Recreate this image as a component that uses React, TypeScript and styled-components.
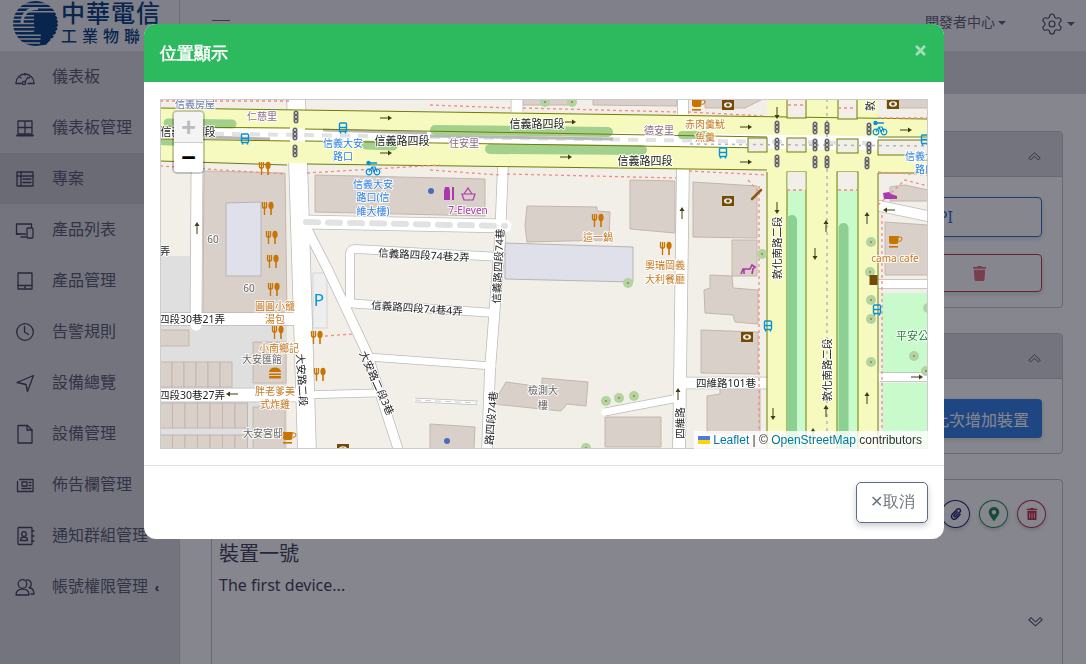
import React from "react";
import styled, { createGlobalStyle } from "styled-components";
import { FaPaperclip, FaMapMarkerAlt, FaTrash, FaTrashAlt, FaTimes } from "react-icons/fa";
import { Settings } from "lucide-react";

const FONT = `"Noto Sans", "Noto Sans CJK TC", sans-serif`;
const Global = createGlobalStyle`
  html, body { margin: 0; padding: 0; width: 100%; height: 100%; overflow: hidden; }
  #root { height: 100%; }
  * { box-sizing: border-box; }
`;

const Page = styled.div`
  display: flex; height: 664px; width: 1086px; overflow: hidden;
  font-family: ${FONT}; background: #fff; color: #3b3d55;
`;
const Sidebar = styled.aside`
  width: 180px; flex: none; background: #dbdbde; border-right: 1px solid #cfcfd3;
  display: flex; flex-direction: column;
`;
const LogoBox = styled.div`
  height: 51px; flex: none; background: #f3f3f6; padding: 0 0 0 12px;
  display: flex; align-items: flex-start; gap: 2px; overflow: hidden;
`;
const LogoText = styled.div`display: flex; flex-direction: column; color: #003c7c; white-space: nowrap;`;
const LogoMain = styled.div`font-size: 24px; line-height: 28px; letter-spacing: 1px; font-weight: 500; margin-top: -1px;`;
const LogoSub = styled.div`font-size: 16px; line-height: 18px; letter-spacing: 5px; font-weight: 500;`;
const NavItem = styled.div<{ $active?: boolean }>`
  height: 51px; flex: none; display: flex; align-items: center; padding-left: 13px; gap: 15px;
  font-size: 16px; color: #55586e; white-space: nowrap;
  background: ${(p) => (p.$active ? "#c9c9ce" : "transparent")};
`;
const NavText = styled.span`padding-bottom: 3px;`;
const NavCaret = styled.span`font-size: 13px; font-weight: 700; margin-left: 3px; color: #3f4058;`;
const Main = styled.main`flex: 1; display: flex; flex-direction: column; min-width: 0;`;
const Header = styled.header`
  height: 51px; flex: none; background: #f3f3f6; display: flex; align-items: center;
  padding: 0 11px 4px 32px; font-size: 14px; color: #5a5d72;
`;
const Burger = styled.div`
  position: relative; width: 18px; height: 14px; margin-top: 6px;
  border-top: 1.5px solid #666; border-bottom: 1.5px solid #666;
  &::after { content: ""; position: absolute; left: 0; right: 0; top: 4px; height: 1.5px; background: #666; }
`;
const HeaderRight = styled.div`margin-left: auto; display: flex; align-items: center; gap: 34px;`;
const DevCenter = styled.span`padding-bottom: 5px;`;
const Caret = styled.span`
  display: inline-block; margin-left: 3px; width: 0; height: 0; vertical-align: middle;
  border-left: 4px solid transparent; border-right: 4px solid transparent; border-top: 4px solid currentColor;
`;
const SubBar = styled.div`height: 43px; flex: none; background: #dbdbde;`;
const Content = styled.div`flex: 1; padding: 37px 23px 0 31px; display: flex; flex-direction: column; gap: 25px; min-height: 0;`;
const Card = styled.section<{ $tall?: boolean }>`
  border: 1px solid #c4c4ca; border-radius: 4px; flex: none;
  ${(p) => (p.$tall ? "height: 190px;" : "")}
`;
const CardHead = styled.div`
  height: 45px; background: #dbdbde; border-bottom: 1px solid #c4c4ca; display: flex;
  align-items: center; justify-content: flex-end; padding: 5px 21px 0 0; border-radius: 3px 3px 0 0;
`;
const CardBody = styled.div`padding: 20px 20px 15px; display: flex; flex-direction: column; gap: 17px;`;
const OutlineBlue = styled.div`
  height: 40px; border: 1px solid #2a6fd0; border-radius: 4px; color: #2a6fd0; display: flex; align-items: center;
  justify-content: flex-end; padding-right: 88px; box-shadow: 0 2px 5px rgba(0,0,0,.15); font-size: 16px;
`;
const OutlineRed = styled.div`
  height: 38px; border: 1px solid #c93545; border-radius: 4px; color: #e0707b; display: flex; align-items: center;
  justify-content: flex-end; padding-right: 54px; box-shadow: 0 2px 5px rgba(0,0,0,.15); font-size: 15px;
`;
const SolidBlue = styled.div`
  height: 39px; align-self: flex-end; background: #2f7fe6; border-radius: 4px; color: #fff; font-size: 16px;
  display: flex; align-items: center; padding: 0 13px; box-shadow: 0 2px 5px rgba(0,0,0,.15); white-space: nowrap;
`;
const DeviceBody = styled.div`padding: 20px 16px 0 7px; display: flex; flex-direction: column;`;
const RoundRow = styled.div`display: flex; justify-content: flex-end; gap: 9px; height: 28px;`;
const RoundBtn = styled.div<{ $c: string }>`
  width: 29px; height: 28px; border-radius: 50%; border: 1px solid ${(p) => p.$c}; color: ${(p) => p.$c};
  display: flex; align-items: center; justify-content: center; font-size: 12px; box-shadow: 0 2px 4px rgba(0,0,0,.18);
`;
const DevTitle = styled.div`font-size: 20px; line-height: 28px; margin-top: 12px; color: #3f4058;`;
const DevText = styled.div`font-size: 16px; line-height: 24px; margin-top: 5px; color: #3f4058;`;
const DevFoot = styled.div`display: flex; justify-content: flex-end; padding: 19px 3px 0 0;`;

const Backdrop = styled.div`position: fixed; inset: 0; background: rgba(13, 13, 30, .5);`;
const Modal = styled.div`
  position: fixed; left: 144px; top: 24px; width: 800px; height: 515px; background: #fff;
  border-radius: 12px; overflow: hidden; display: flex; flex-direction: column;
`;
const ModalHead = styled.div`
  height: 58px; flex: none; background: #2dba5e; color: #fff; display: flex; align-items: center;
  justify-content: space-between; padding: 0 16px 0 16px; font-size: 17px; font-weight: 700;
`;
const CloseX = styled.span`display: flex; opacity: .55; margin-top: -6px;`;
const ModalBody = styled.div`padding: 17px 16px 16px; border-bottom: 1px solid #dee2e6; flex: none;`;
const MapBox = styled.div`position: relative; width: 768px; height: 350px; overflow: hidden; background: #f2efe9; outline: 1px solid #ccc; outline-offset: -1px;`;
const MapSvg = styled.svg`display: block; width: 768px; height: 350px;`;
const ZoomBar = styled.div`
  position: absolute; left: 12px; top: 11px; width: 33px; border: 2px solid rgba(0,0,0,.2); border-radius: 5px;
  background-clip: padding-box; overflow: hidden;
`;
const ZoomBtn = styled.div<{ $off?: boolean }>`
  height: 30px; width: 100%; display: flex; align-items: center; justify-content: center;
  background: ${(p) => (p.$off ? "#f4f4f4" : "#fff")}; color: ${(p) => (p.$off ? "#bbb" : "#000")};
  font: 700 25px "Liberation Sans", sans-serif;
  & + & { border-top: 1px solid #ccc; }
`;
const Attribution = styled.div`
  position: absolute; right: 0; bottom: 0; height: 18px; padding: 0 6px 0 4px; background: rgba(255,255,255,.8);
  font: 12px/18px "Liberation Sans", sans-serif; color: #333; display: flex; align-items: center; gap: 3px; white-space: pre;
`;
const AttrLink = styled.span`color: #0078a8;`;
const ModalFoot = styled.div`flex: 1; display: flex; justify-content: flex-end; align-items: flex-start; padding: 16px;`;
const CancelBtn = styled.div`
  width: 72px; height: 41px; border: 1px solid #5c6b88; border-radius: 5px; color: #6c757d; font-size: 16px;
  display: flex; align-items: center; justify-content: center; box-shadow: 0 3px 6px rgba(0,0,0,.2);
`;

const Lbl = styled.text<{ $k: string; $fs?: number }>`
  font-family: "Noto Sans", "Noto Sans CJK TC", sans-serif;
  font-size: ${(p) => p.$fs ?? 10}px;
  text-anchor: middle; dominant-baseline: central;
  paint-order: stroke; stroke: rgba(255,255,255,.85); stroke-width: 2px;
  fill: ${(p) => ({ road: "#222", poi: "#c47a22", gray: "#666", hamlet: "#8a6b8f", blue: "#2d82e8", brand: "#ac39ac", green: "#258a38", corp: "#6677aa" } as Record<string, string>)[p.$k]};
`;

const Ic = ({ children, s = 24 }: { children: React.ReactNode; s?: number }) => (
  <svg width={s} height={s} viewBox="0 0 24 24" fill="none" stroke="#3f4058" strokeWidth={1.3} strokeLinecap="round" strokeLinejoin="round" style={{ flex: "none" }}>{children}</svg>
);

const nav: [string, React.ReactNode, boolean?][] = [
  ["儀表板", <><path d="M3 18a9 9 0 1 1 18 0" /><path d="M3 18.5h6M15 18.5h6" /><circle cx="11" cy="18" r="1.6" /><path d="M12 17l3-5M7 12l1 1M12 8.500v1.500M17 12l-1 1" /></>],
  ["儀表板管理", <><path d="M5 5h14v13H5zM12 5v13M5 11.500h14" /><path d="M4 19.500h16" strokeWidth={2} /></>],
  ["專案", <><rect x="4" y="5" width="16" height="14" /><path d="M4 9h16M8 5v14M10 12h8M10 15.500h8" /></>, true],
  ["產品列表", <><path d="M6 16H3.500V6h15v3" /><path d="M3.500 16h9M8 19h5" /><rect x="14" y="10" width="6" height="10" rx="1" /></>],
  ["產品管理", <><rect x="5" y="4" width="14" height="16" /><path d="M5 16.500h14" /><circle cx="12" cy="18.200" r=".4" /></>],
  ["告警規則", <><circle cx="12" cy="12" r="8.300" /><path d="M11.500 6.500V12l4 2.500" /></>],
  ["設備總覽", <path d="M20.500 4.500L4 11.500l9 2 1.500 7z" />],
  ["設備管理", <><path d="M5 3.500h9.500L19 8v13H5z" /><path d="M14 3.500V8h5" /></>],
  ["佈告欄管理", <><path d="M6.500 6.500H20v12H4.500V8.500" /><rect x="9" y="9" width="5" height="4" /><path d="M16 9.500h2M16 12.500h2M9 15.500h9" /></>],
  ["通知群組管理", <><rect x="5" y="3.500" width="14" height="17" rx=".8" /><circle cx="11" cy="10" r="2.300" /><path d="M7.500 16.500c0-2.500 1.500-3.500 3.500-3.500s3.500 1 3.500 3.500zM19 7h2M19 12h2M19 17h2" /></>],
  ["帳號權限管理", <><circle cx="9.500" cy="9" r="4.300" /><path d="M3 20c0-4 2.300-5.800 6.500-5.800s6.500 1.800 6.500 5.800zM13.500 5a4 4 0 0 1 2.500 7.500c3 .5 5 2.300 5 6.500h-3" /></>],
];

const Chev = ({ up, w = 13 }: { up?: boolean; w?: number }) => (
  <svg width={w} height={w * 0.72} viewBox="0 0 18 13" fill="none" stroke="#55576c" strokeWidth="1.300" strokeLinejoin="round" style={{ transform: up ? "none" : "rotate(180deg)" }}>
    <path d="M9 1L17 8.500 14.500 11 9 6 3.500 11 1 8.500Z" />
  </svg>
);

const Logo = () => (
  <svg width="47" height="48" viewBox="0 0 47 48" style={{ flex: "none" }}>
    <defs><clipPath id="lc"><circle cx="23.500" cy="23.500" r="22.500" /></clipPath></defs>
    <g clipPath="url(#lc)" stroke="#003c7c" strokeWidth="2.400">
      {Array.from({ length: 12 }, (_, i) => <line key={i} x1="0" x2="47" y1={2 + i * 3.9} y2={2 + i * 3.9} />)}
    </g>
    <path d="M22 13.500H42c3.500 4 4 12 1.500 18l-9 13c-3 .8-4 .8-6.500.6L29 34.500l-9-1.500 4-3.500-2-3 .1-7.500z" fill="#003c7c" />
    <path d="M10 23.500C10 14 16 8 26 8.500" fill="none" stroke="#f3f3f6" strokeWidth="3" />
  </svg>
);

// ---------- map drawing ----------
const ROADS: [string, number][] = [
  ["M296 95L307 452", 18], ["M197 165L196 325", 11], ["M155 319L298 319", 12], ["M155 395L300 395", 13], ["M300 395L375 393", 7],
  ["M305 225L328 270L367 353L399 452", 9], ["M503 165L500 240L490 370L487 452", 10],
  ["M350 302L350 254Q350 249 356 249L500 257", 8], ["M345 303L495 313", 8], ["M368 357L492 366", 7],
  ["M683 165L679 452", 12], ["M605 412L673 399", 7], ["M680 383L770 383", 11], ["M875 205L932 217", 10], ["M875 284L932 284", 8], ["M880 377L932 377", 8],
  ["M517 95L517 112", 11], ["M683 95L683 114", 10], ["M305 222L505 226", 13], ["M415 400L478 403", 3],
];
const BUILDINGS = [
  "315,175 485,179 485,216 315,212", "204,171 285,173 287,313 203,313", "527,206 597,207 597,211 610,212 609,240 527,242 525,226",
  "630,180 675,181 675,233 630,229", "506,382 542,387 542,378 588,382 586,406 567,404 561,411 493,404",
  "430,424 475,427 474,449 430,449", "605,417 661,417 661,447 605,447", "705,99 763,99 745,108 705,108", "523,99 570,99 568,105 523,105", "593,99 677,99 677,106 593,105",
  "887,99 928,99 928,108 887,108", "693,182 757,186 757,238 693,237", "732,240 757,240 757,276 732,276",
  "710,275 732,276 733,288 758,290 758,324 735,322 733,315 705,313 704,290 710,288", "701,330 758,332 758,374 701,373", "707,396 720,394 720,387 760,388 760,433 707,433",
  "890,187 905,185 928,190 928,201 890,201", "885,222 928,225 928,275 885,275", "253,342 286,342 286,383 253,383", "253,407 285,407 285,449 253,449", "160,330 189,330 189,346 160,346",
];
const CELLS = [[160, 362, 6, 12, 25], [160, 403, 7, 12.5, 25], [160, 435, 7, 12.5, 20]];
const PINK = [
  "M160 101L292 101", "M160 166L285 174", "M307 173L440 165", "M430 170L500 175", "M507 174L676 178", "M430 105L510 108", "M523 108L678 112",
  "M689 171L767 175", "M759 186V430", "M882 215V430", "M688 112L765 116", "M878 118L928 118", "M878 172L928 175", "M878 205L905 180L928 186", "M787 190H806M838 190H857", "M788 105H805M838 108H857", "M748 180L759 192", "M325 336L353 334",
];
const FORK = [[265, 168], [268, 208], [272, 237], [273, 261], [274, 289], [278, 332], [317, 337], [320, 374], [598, 220], [666, 248]];
const CUP = [[289, 438], [698, 105], [895, 242]];
const BOX = [[728, 105], [728, 201], [893, 104], [747, 337], [343, 449]];
const BUS = [[245, 139], [343, 128], [723, 153], [768, 326], [877, 310], [925, 140]];
const SIG = [[296, 117], [295, 134], [295, 151], [777, 127], [777, 144], [777, 161], [815, 128], [815, 145], [815, 162], [827, 128], [827, 145], [827, 162], [869, 129], [869, 148], [867, 163]];
const ARROW = [[386, 118, 0], [386, 153, 0], [570, 122, 0], [566, 157, 0], [746, 127, 0], [746, 162, 0], [906, 130, 0], [777, 113, 90], [777, 208, 90], [815, 254, 90], [826, 226, -90], [867, 218, -90], [773, 414, 90], [826, 411, -90], [867, 398, -90], [813, 434, -90], [197, 228, -90], [682, 213, -90], [678, 394, -90], [232, 394, 180], [889, 210, 180], [917, 377, 0]];
const TREE = [[545, 102], [572, 102], [628, 283], [606, 401], [619, 398], [634, 396], [586, 448], [762, 254], [871, 242], [870, 272], [871, 300], [871, 319], [871, 362], [914, 356], [928, 308], [926, 371]];
const GREEN = [["M168 123L232 124", 9], ["M435 130L608 132", 10], ["M490 149L642 150", 10], ["M366 145L393 146", 9], ["M160 142L178 143", 6], ["M682 135L706 135", 8]] as [string, number][];
const LABELS: [string, number, number, string, number?, number?][] = [
  ["信義房屋", 195, 104, "corp"], ["仁慈里", 262, 116, "hamlet"], ["住安里", 464, 143, "hamlet"], ["德安里", 659, 130, "hamlet"],
  ["信義路四段", 188, 131, "road", 11], ["信義路四段", 402, 140, "road", 11], ["信義路四段", 537, 123, "road", 11], ["信義路四段", 645, 160, "road", 11],
  ["信義路四段74巷2弄", 424, 255, "road", 10.500, 3], ["信義路四段74巷4弄", 417, 308, "road", 10.500, 4],
  ["信義路四段74巷", 498, 266, "road", 10.500, -87], ["路四段74巷", 491, 418, "road", 10.500, -85],
  ["大安路二段", 302, 380, "road", 10.500, 86], ["大安路二段3巷", 377, 383, "road", 10.500, 66], ["四維路", 680, 423, "road", 10.500, -90],
  ["敦化南路二段", 777, 248, "road", 10.500, -90], ["敦化南路二段", 827, 370, "road", 10.500, -90], ["敦", 870, 106, "road", 10.500, -90],
  ["四維路101巷", 726, 383, "road", 10.500], ["弄", 165, 251, "road", 10.500], ["60", 213, 239, "gray"], ["60", 249, 288, "gray"],
  ["圓圓小籠", 275, 306, "poi"], ["湯包", 275, 319, "poi"], ["小南鄉記", 279, 348, "poi"], ["胖老爹美", 275, 391, "poi"], ["式炸雞", 275, 404, "poi"],
  ["這一鍋", 598, 237, "poi"], ["奧瑞岡義", 665, 265, "poi"], ["大利餐廳", 665, 279, "poi"], ["赤肉羹魷", 705, 124, "poi"], ["魚羹", 705, 137, "poi"], ["cama cafe", 895, 258, "poi"],
  ["大安匯館", 262, 359, "gray"], ["大安宮邸", 263, 433, "gray"], ["檢測大", 543, 390, "gray"], ["樓", 543, 405, "gray"],
  ["信義大安", 343, 143, "blue"], ["路口", 343, 156, "blue"], ["信義大安", 373, 184, "blue"], ["路口(信", 373, 197, "blue"], ["維大樓)", 373, 211, "blue"],
  ["信義大安", 925, 156, "blue"], ["路口", 925, 169, "blue"], ["7-Eleven", 468, 210, "brand"], ["平安公園", 918, 335, "green", 11],
];

const Fork = ({ x, y }: { x: number; y: number }) => (
  <g transform={`translate(${x} ${y})`} stroke="#c77400" fill="none" strokeWidth="1.300">
    <path d="M-5.500-6v4.500q0 1.500 2 1.500t2-1.500V-6M-3.500-6v13" />
    <path d="M3-1v8" strokeWidth="1.600" /><ellipse cx="3" cy="-2.500" rx="2.600" ry="3.800" fill="#c77400" stroke="none" />
  </g>
);
const Cup = ({ x, y }: { x: number; y: number }) => (
  <g transform={`translate(${x} ${y})`} fill="#c77400" stroke="none">
    <path d="M-6-6H3.500V-.5Q3.500 2 1 2H-3.500Q-6 2-6-.5Z" /><path d="M3-5h2q2 0 2 2t-3 2.500" fill="none" stroke="#c77400" />
    <rect x="-6" y="4" width="9" height="1.600" />
  </g>
);
const Box = ({ x, y }: { x: number; y: number }) => (
  <g transform={`translate(${x} ${y})`}>
    <rect x="-6" y="-5" width="12" height="10" fill="#734a08" /><ellipse cx="0" cy="0" rx="4" ry="2.700" fill="#f2efe9" /><ellipse cx="0" cy="0" rx="1.800" ry="1.400" fill="#734a08" />
  </g>
);
const Bus = ({ x, y }: { x: number; y: number }) => (
  <g transform={`translate(${x} ${y})`} fill="none" stroke="#0092da">
    <rect x="-3.500" y="-5" width="7" height="8.500" rx="1" strokeWidth="1.400" /><path d="M-3.500-.5h7" strokeWidth="1.400" /><path d="M-2.500 4v1.500M2.500 4v1.500" strokeWidth="1.500" />
  </g>
);
const Signal = ({ x, y }: { x: number; y: number }) => (
  <g transform={`translate(${x} ${y})`} fill="#eee" stroke="#555" strokeWidth="1">
    <rect x="-2.500" y="-6.500" width="5" height="13" rx="2.500" fill="#777" stroke="none" />
    <circle cy="-4" r="1.500" /><circle cy="0" r="1.500" /><circle cy="4" r="1.500" />
  </g>
);
const Arrow = ({ x, y, r }: { x: number; y: number; r: number }) => (
  <g transform={`translate(${x} ${y}) rotate(${r})`} fill="#3d3d16" stroke="#3d3d16" strokeWidth="1">
    <path d="M-6 0H3" /><path d="M2-2.500L6 0 2 2.500Z" stroke="none" />
  </g>
);
const Bike = ({ x, y }: { x: number; y: number }) => (
  <g transform={`translate(${x} ${y})`} fill="none" stroke="#0092da" strokeWidth="1.200">
    <circle cx="-4" cy="4" r="2.800" /><circle cx="4" cy="4" r="2.800" /><path d="M-4 4l3-5h3l2 5M-1-1l2 5" />
    <circle cx="-4.500" cy="-5" r="1.600" fill="#0092da" /><path d="M-4-5h8" strokeWidth="1.500" />
  </g>
);
const Tree = ({ x, y }: { x: number; y: number }) => (
  <g transform={`translate(${x} ${y})`}><circle r="5" fill="#b0d5a0" /><circle r=".9" fill="#b4693b" /></g>
);

const MapDrawing = () => (
  <MapSvg viewBox="160 99 768 350">
    <rect x="160" y="99" width="768" height="350" fill="#f2efe9" />
    {/* landuse */}
    <rect x="160" y="325" width="127" height="124" fill="#e0dfdf" />
    <rect x="160" y="256" width="30" height="57" fill="#e0dfdf" />
    <rect x="160" y="170" width="32" height="68" fill="#f2efe9" />
    <rect x="882" y="293" width="46" height="80" fill="#c8facc" />
    <rect x="882" y="383" width="46" height="66" fill="#c8facc" />
    <rect x="313" y="273" width="14" height="55" fill="#eeeeee" stroke="#d5d5d5" />
    {/* buildings */}
    {BUILDINGS.map((p, i) => <polygon key={i} points={p} fill="#d9d0c9" stroke="#c4b6ab" />)}
    {CELLS.flatMap(([x0, y, n, w, h], r) => Array.from({ length: n }, (_, i) => (
      <rect key={`${r}-${i}`} x={x0 + i * w} y={y} width={w} height={h} fill="#d9d0c9" stroke="#c4b6ab" />
    )))}
    <polygon points="226,203 261,202 261,276 226,276" fill="#dfe0ea" stroke="#b5b5b5" />
    <polygon points="505,243 633,247 633,282 505,279" fill="#dfe0ea" stroke="#b5b5b5" />
    {/* minor roads */}
    {ROADS.map(([d, w], i) => <path key={i} d={d} fill="none" stroke="#bbb" strokeWidth={w + 1.500} />)}
    {ROADS.map(([d, w], i) => <path key={i} d={d} fill="none" stroke="#fff" strokeWidth={w} strokeLinecap="round" />)}
    <path d="M306 222L505 226" fill="none" stroke="#e2e2e2" strokeWidth="6" strokeDasharray="12 10" strokeLinecap="round" />
    <path d="M415 400L478 403" fill="none" stroke="#ccc" strokeWidth="1" strokeDasharray="6 4" />
    {/* 敦化南路 and 信義路 */}
    <rect x="767" y="99" width="111" height="350" fill="#f7fabf" />
    <polygon points="160,108 928,119 928,137 160,127" fill="#f7fabf" />
    <polygon points="160,139 928,151 928,173 160,161" fill="#f7fabf" />
    <polygon points="160,127 928,137 928,151 160,139" fill="#fff" />
    <path d="M160 133L928 144" stroke="#e2e2e2" strokeWidth="4" strokeDasharray="10 8" fill="none" />
    <path d="M323 130L427 133M203 137L270 139M430 136L613 139M900 142L928 143" stroke="#b8b8b8" strokeWidth="3" fill="none" />
    {GREEN.map(([d, w], i) => <path key={i} d={d} fill="none" stroke="#a4d08e" strokeWidth={w} strokeLinecap="round" />)}
    <path d="M160 108L928 119M160 127L290 128M305 129L767 137M160 139L290 141M305 141L767 148M160 161L287 165M307 164L767 170M878 137L928 137M878 173L928 173" stroke="#707d05" strokeWidth="1" fill="none" />
    <rect x="787" y="172" width="19" height="277" fill="#c8facc" stroke="#707d05" />
    <rect x="837" y="172" width="21" height="277" fill="#c8facc" stroke="#707d05" />
    <rect x="787.500" y="172" width="18" height="18" fill="#f2efe9" />
    <rect x="838" y="172" width="19" height="18" fill="#f2efe9" />
    <path d="M792 450V220" stroke="#8cd094" strokeWidth="10" strokeLinecap="round" />
    <path d="M843.500 450V228" stroke="#8cd094" strokeWidth="10" strokeLinecap="round" />
    {[[787, 99, 19, 19], [838, 99, 19, 20], [787, 138, 19, 14], [837, 139, 21, 14], [748, 138, 19, 14], [878, 140, 50, 15]].map(([x, y, w, h], i) => (
      <rect key={i} x={x} y={y} width={w} height={h} fill="#f2efe9" stroke="#707d05" />
    ))}
    <path d="M767 172V449M878 173V449" stroke="#707d05" strokeWidth="1" />
    <path d="M827 99V449M690 144L928 146" stroke="#b5b5b5" strokeWidth="1.500" strokeDasharray="3 4" />
    {/* footway boundaries */}
    {PINK.map((d, i) => <path key={i} d={d} fill="none" stroke="#f58b80" strokeWidth="1.300" strokeDasharray="3 3" />)}
    {TREE.map(([x, y], i) => <Tree key={i} x={x} y={y} />)}
    {ARROW.map(([x, y, r], i) => <Arrow key={i} x={x} y={y} r={r} />)}
    {SIG.map(([x, y], i) => <Signal key={i} x={x} y={y} />)}
    {FORK.map(([x, y], i) => <Fork key={i} x={x} y={y} />)}
    {CUP.map(([x, y], i) => <Cup key={i} x={x} y={y} />)}
    {BOX.map(([x, y], i) => <Box key={i} x={x} y={y} />)}
    {BUS.map(([x, y], i) => <Bus key={i} x={x} y={y} />)}
    <Bike x={373} y={168} /><Bike x={880} y={128} />
    <circle cx="431" cy="191" r="3" fill="#4e6db8" /><circle cx="447" cy="441" r="3" fill="#4e6db8" />
    {/* burger */}
    <g fill="#c77400"><path d="M269 372a6 4.500 0 0 1 12 0z" /><rect x="269" y="373.500" width="12" height="1.500" /><rect x="269" y="376" width="12" height="2.500" rx="1" /></g>
    {/* phone */}
    <path d="M752 199l9-9" stroke="#8a5a10" strokeWidth="2.500" strokeLinecap="round" />
    {/* P */}
    <text x="319" y="306" fontSize="17" fontFamily='"Noto Sans", sans-serif' fill="#0092da" textAnchor="middle">P</text>
    {/* shop */}
    <path d="M445 187h4l1 4v9h-6v-9z" fill="#ac39ac" /><path d="M452 187h2v13h-2z" fill="#ac39ac" />
    <path d="M462 194h13l-2 6h-9zM464 194l4-6 4 6" fill="none" stroke="#ac39ac" strokeWidth="1.200" />
    {/* horse, shoe */}
    <path d="M741 274l2-5h7l2-4 3 2-2 2-1 5M744 269v5" fill="none" stroke="#ac39ac" strokeWidth="1.600" />
    <path d="M883 193l1 6h13v-3l-6-2-2-2z" fill="#ac39ac" />
    <rect x="869.500" y="275" width="8" height="10" fill="#734a08" />
    {LABELS.map(([t, x, y, k, fs, r], i) => (
      <Lbl key={i} x={x} y={y} $k={k} $fs={fs} transform={r ? `rotate(${r} ${x} ${y})` : undefined}>{t}</Lbl>
    ))}
    <Lbl x={192} y={319} $k="road" $fs={10.500}>四段30巷21弄</Lbl>
    <Lbl x={192} y={395} $k="road" $fs={10.500}>四段30巷27弄</Lbl>
  </MapSvg>
);

export default function App() {
  return (
    <>
      <Global />
      <Page>
        <Sidebar>
          <LogoBox>
            <Logo />
            <LogoText><LogoMain>中華電信</LogoMain><LogoSub>工業物聯</LogoSub></LogoText>
          </LogoBox>
          {nav.map(([t, icon, active]) => (
            <NavItem key={t} $active={active}>
              <Ic>{icon}</Ic>
              <NavText>{t}{t === "帳號權限管理" && <NavCaret> ‹</NavCaret>}</NavText>
            </NavItem>
          ))}
        </Sidebar>
        <Main>
          <Header>
            <Burger />
            <HeaderRight>
              <DevCenter>開發者中心<Caret /></DevCenter>
              <span><Settings size={24} strokeWidth={1.100} color="#3f4058" style={{ verticalAlign: "middle" }} /><Caret /></span>
            </HeaderRight>
          </Header>
          <SubBar />
          <Content>
            <Card>
              <CardHead><Chev up /></CardHead>
              <CardBody>
                <OutlineBlue>API</OutlineBlue>
                <OutlineRed><FaTrash /></OutlineRed>
              </CardBody>
            </Card>
            <Card>
              <CardHead><Chev up /></CardHead>
              <CardBody><SolidBlue>此次增加裝置</SolidBlue></CardBody>
            </Card>
            <Card $tall>
              <DeviceBody>
                <RoundRow>
                  <RoundBtn $c="#1f1f72"><FaPaperclip /></RoundBtn>
                  <RoundBtn $c="#1d8a4e"><FaMapMarkerAlt size={14} /></RoundBtn>
                  <RoundBtn $c="#c02c3c"><FaTrashAlt /></RoundBtn>
                </RoundRow>
                <DevTitle>裝置一號</DevTitle>
                <DevText>The first device...</DevText>
                <DevFoot><Chev w={15} /></DevFoot>
              </DeviceBody>
            </Card>
          </Content>
        </Main>
      </Page>
      <Backdrop />
      <Modal>
        <ModalHead>位置顯示<CloseX><FaTimes size={15} /></CloseX></ModalHead>
        <ModalBody>
          <MapBox>
            <MapDrawing />
            <ZoomBar>
              <ZoomBtn $off>+</ZoomBtn>
              <ZoomBtn>−</ZoomBtn>
            </ZoomBar>
            <Attribution>
              <svg width="12" height="8" viewBox="0 0 12 8"><rect width="12" height="4" fill="#4C7BE1" /><rect y="4" width="12" height="4" fill="#FFD500" /></svg>
              <span><AttrLink>Leaflet</AttrLink> | © <AttrLink>OpenStreetMap</AttrLink> contributors</span>
            </Attribution>
          </MapBox>
        </ModalBody>
        <ModalFoot><CancelBtn>✕取消</CancelBtn></ModalFoot>
      </Modal>
    </>
  );
}
